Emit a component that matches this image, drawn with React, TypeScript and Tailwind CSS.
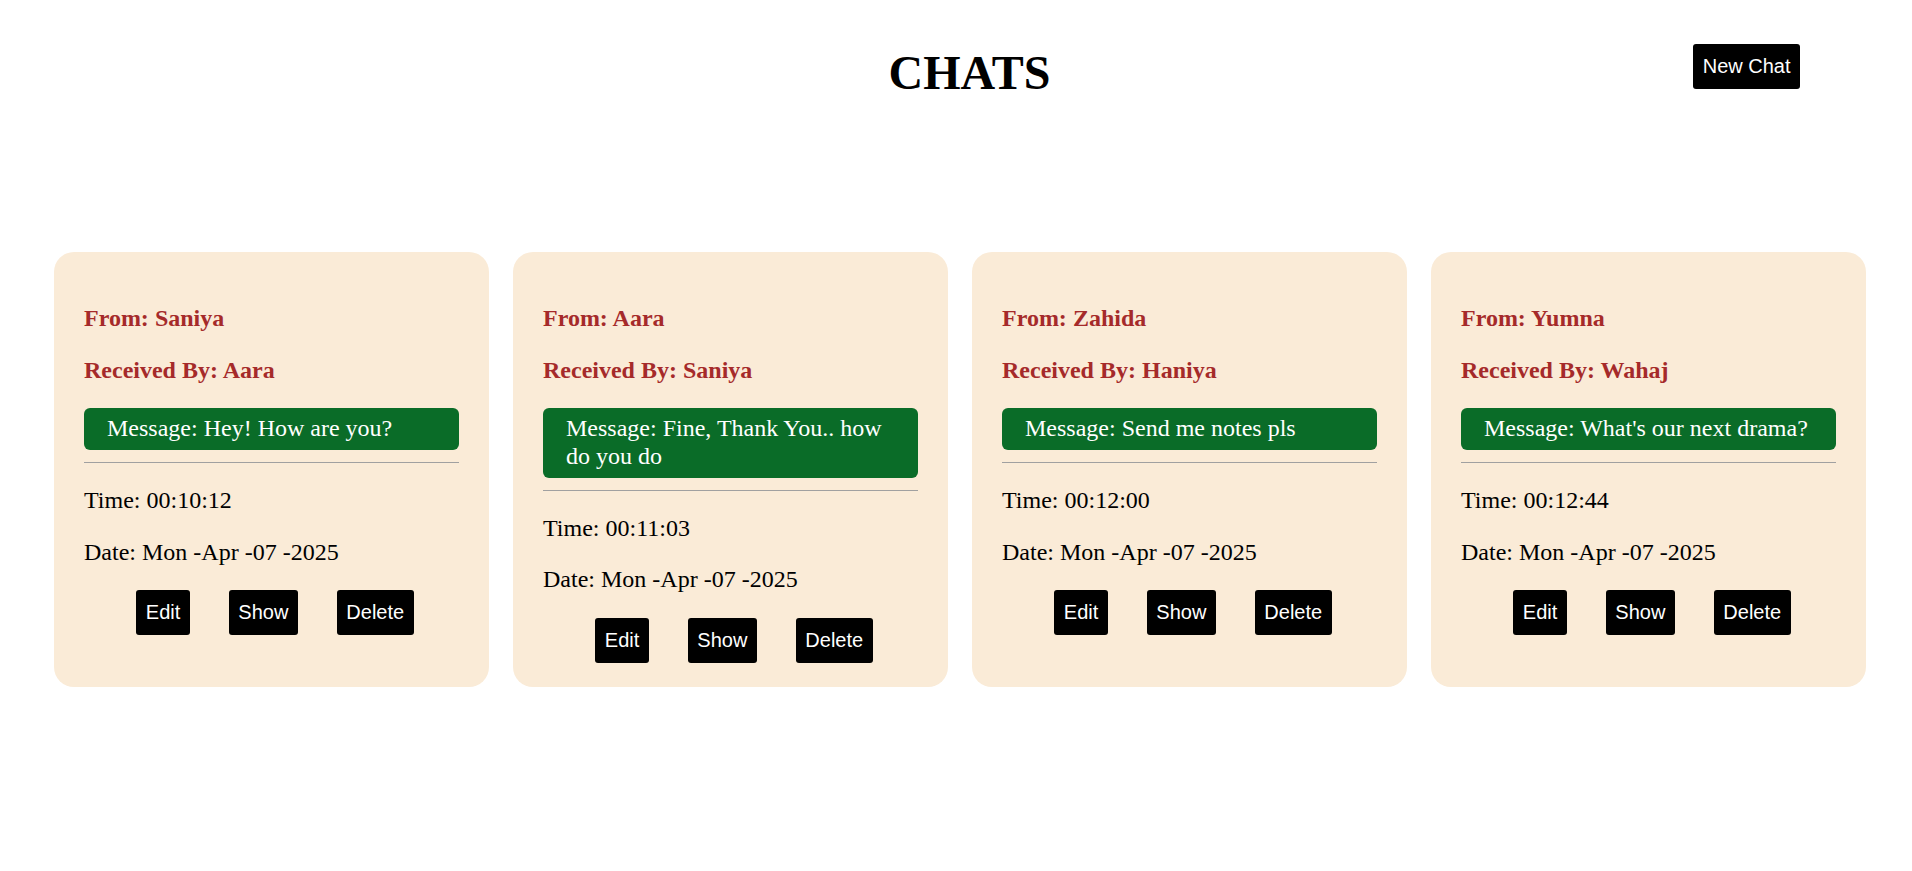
const chats = [
	{ from: 'Saniya', to: 'Aara', message: 'Hey! How are you?', time: '00:10:12', date: 'Mon -Apr -07 -2025' },
	{ from: 'Aara', to: 'Saniya', message: 'Fine, Thank You.. how do you do', time: '00:11:03', date: 'Mon -Apr -07 -2025' },
	{ from: 'Zahida', to: 'Haniya', message: 'Send me notes pls', time: '00:12:00', date: 'Mon -Apr -07 -2025' },
	{ from: 'Yumna', to: 'Wahaj', message: "What's our next drama?", time: '00:12:44', date: 'Mon -Apr -07 -2025' },
]

const serif = "font-['Liberation_Serif','Times_New_Roman',serif]"
const sans = "font-['Liberation_Sans',Arial,sans-serif]"
const btn = `rounded-[3px] bg-black px-[9.5px] py-[11px] text-[20px] leading-[23px] text-white ${sans}`

function ChatCard({ chat }: { chat: (typeof chats)[number] }) {
	return (
		<div className="w-[435px] rounded-[20px] bg-[#faebd7] px-[30px] pt-[29px] pb-[24px]">
			<h3 className="mt-[24px] text-[24px] font-bold leading-[1.15] text-[#a52a2a]">From: {chat.from}</h3>
			<h3 className="mt-[24px] text-[24px] font-bold leading-[1.15] text-[#a52a2a]">Received By: {chat.to}</h3>
			<div className="mt-[24px] rounded-[6px] bg-[#0a6c28] pl-[23px] pr-[23px] py-[7px] text-[24px] leading-[1.15] text-white">
				Message: {chat.message}
			</div>
			<hr className="mt-[12px] border-0 border-t border-[#a0a0a0]" />
			<p className="mt-[24px] text-[24px] leading-[1.15] text-black">Time: {chat.time}</p>
			<p className="mt-[24px] text-[24px] leading-[1.15] text-black">Date: {chat.date}</p>
			<div className="mt-[24px] flex justify-center gap-[39px] pl-[7px]">
				<button className={btn}>Edit</button>
				<button className={btn}>Show</button>
				<button className={btn}>Delete</button>
			</div>
		</div>
	)
}

export default function App() {
	return (
		<div className={`min-h-screen bg-white ${serif}`}>
			{/* Header */}
			<div className="grid grid-cols-[1fr_auto_1fr] items-start pt-[44px] pl-[139px] pr-[112px]">
				<div></div>
				<h1 className="mt-[1px] text-[48px] font-bold leading-[1.15] text-black">CHATS</h1>
				<div className="flex justify-end">
					<button className={btn}>New Chat</button>
				</div>
			</div>

			{/* Cards */}
			<div className="mt-[152px] flex gap-[24px] pl-[54px]">
				{chats.map((chat) => (
					<ChatCard key={chat.from} chat={chat} />
				))}
			</div>
		</div>
	)
}
